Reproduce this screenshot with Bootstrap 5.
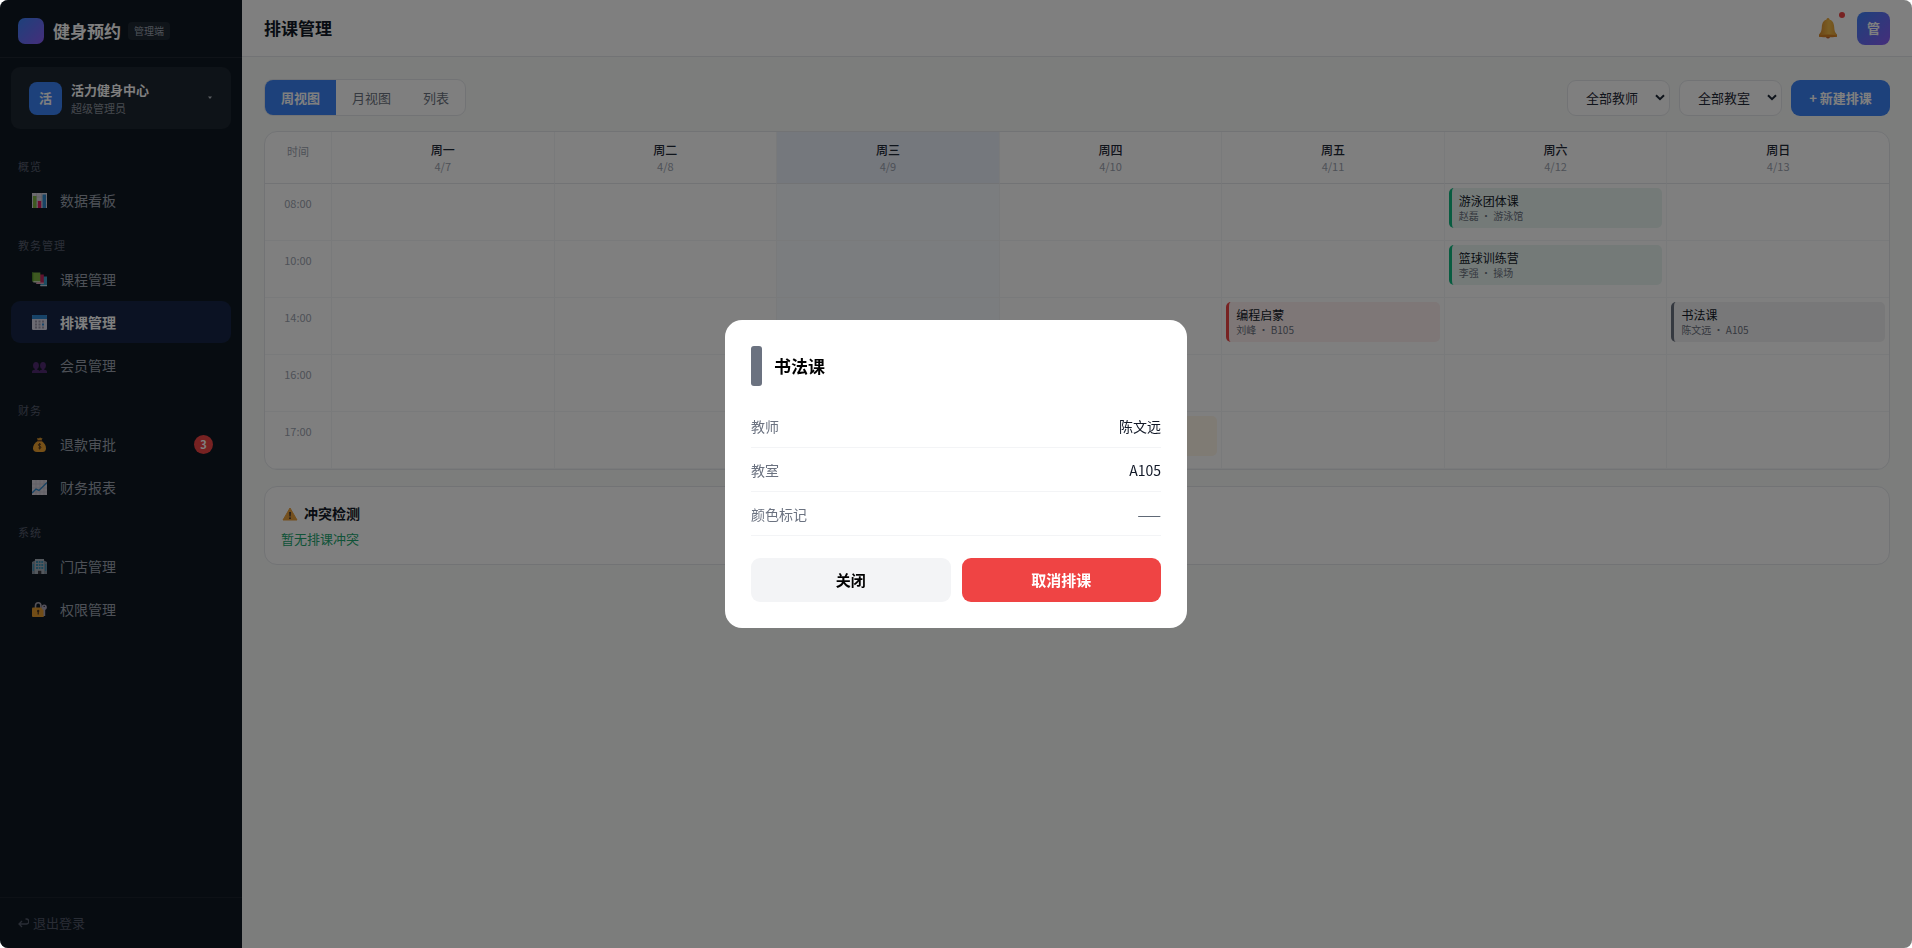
<!DOCTYPE html>
<html lang="zh-CN">
<head>
<meta charset="utf-8">
<meta name="viewport" content="width=device-width, initial-scale=1">
<title>排课管理 - 健身预约</title>
<link rel="stylesheet" href="https://cdn.jsdelivr.net/npm/bootstrap@5.3.0/dist/css/bootstrap.min.css">
<style>
  body { font-family: "Noto Sans CJK SC", "Noto Sans", sans-serif; font-size: 14px; line-height: 20px; color: #111827; background: #fff; }
  button, select { font-family: inherit; }
  .app { min-height: 100vh; border-radius: 8px; background: #f8fbf9; }

  /* sidebar */
  .sidebar { width: 242px; background: #0f1923; }
  .brand-bar { height: 58px; padding: 0 18px; border-bottom: 1px solid #1e2731; }
  .brand-mark { width: 26px; height: 26px; border-radius: 7px; background: linear-gradient(135deg, #3b82f6, #8b5cf6); }
  .brand-name { font-size: 17px; margin-left: 9px; color: #fff; }
  .brand-tag { font-size: 10px; line-height: 18px; padding: 0 6px; margin-left: 7px; border-radius: 4px; background: #1f2832; color: #9ca3af; }
  .store { margin: 9px 11px 14px; padding: 0 18px; height: 62px; border: 0; border-radius: 9px; background: #1d2630; text-align: left; }
  .avatar { width: 33px; height: 33px; border-radius: 8px; color: #fff; font-size: 13px; background: #3b82f6; }
  .store-text { margin-left: 9px; }
  .store-name { font-size: 13px; line-height: 20px; color: #fff; }
  .store-role { font-size: 11px; line-height: 16px; color: #8b929d; }
  .nav-label { font-size: 11px; line-height: 14px; letter-spacing: 1px; padding: 16px 18px 6px; color: #575e6f; }
  .side-link { height: 42px; margin: 0 11px 1px; padding: 0 18px 0 21px; border-radius: 9px; color: #9ca3af; text-decoration: none; }
  .side-link svg { width: 15px; height: 15px; margin-right: 13px; }
  .side-link.current { background: #162546; color: #fff; font-weight: 700; }
  .count { min-width: 19px; line-height: 19px; border-radius: 10px; background: #ef4444; color: #fff; font-size: 11px; text-align: center; }
  .logout { height: 51px; padding: 0 18px; border-top: 1px solid #1a232d; font-size: 13px; color: #535a6b; text-decoration: none; }
  .logout svg { margin-right: 4px; }

  /* top bar and tools */
  .topbar { height: 57px; padding: 0 22px; background: #fff; border-bottom: 1px solid #e5e7eb; }
  .topbar h1 { font-size: 17px; line-height: 24px; font-weight: 700; }
  .bell { width: 20px; height: 22px; margin-right: 19px; }
  .bell-dot { position: absolute; top: -5px; right: -7px; width: 6px; height: 6px; border-radius: 50%; background: #ef4444; }
  .avatar-me { background: linear-gradient(135deg, #3b82f6, #8b5cf6); }
  .content { padding: 22px; }
  .tools { gap: 9px; margin-bottom: 15px; }
  .seg { border: 1px solid #e5e7eb; border-radius: 9px; overflow: hidden; background: #fff; }
  .seg button { height: 35px; padding: 0 16px; border: 0; background: none; font-size: 13px; color: #6b7280; }
  .seg button.on { background: #3b82f6; color: #fff; font-weight: 700; }
  .filter { width: 103px; height: 36px; padding: 0 18px; border-color: #e5e7eb; border-radius: 9px; font-size: 13px; line-height: 20px; color: #1f2937;
    background-color: #fff; background-size: 10px 7px; background-position: right 4px center;
    background-image: url("data:image/svg+xml,%3Csvg xmlns='http://www.w3.org/2000/svg' viewBox='0 0 10 7'%3E%3Cpath d='M1 1.2 5 5.2 9 1.2' fill='none' stroke='%231f2937' stroke-width='2'/%3E%3C/svg%3E"); }
  .btn-new { width: 99px; height: 36px; padding: 0; border: 0; border-radius: 9px; background: #3b82f6; color: #fff; font-size: 13px; font-weight: 700; }

  /* timetable */
  .panel { background: #fff; border: 1px solid #e5e7eb; border-radius: 13px; overflow: hidden; }
  .timetable { width: 100%; table-layout: fixed; border-collapse: separate; border-spacing: 0; }
  .timetable th, .timetable td { padding: 0; vertical-align: top; border: solid #f3f4f6; border-width: 0 0 1px 1px; }
  .timetable thead th { height: 52px; padding-top: 9px; text-align: center; border-bottom-color: #e5e7eb; font-weight: 400; }
  .timetable .hour { width: 66px; border-left-width: 0; font-size: 11px; line-height: 20px; text-align: center; font-weight: 400; color: #9ca3af; }
  .timetable tbody .hour { padding-top: 9px; }
  .timetable tbody tr { height: 57px; }
  .day-name { font-size: 12px; line-height: 18px; font-weight: 500; color: #1f2937; }
  .day-date { font-size: 11px; line-height: 15px; color: #9ca3af; }
  .timetable thead .today { background: #eaf0fb; }
  .timetable tbody .today { background: #f7faff; }
  .timetable tbody td { padding: 4px; }
  .lesson { height: 40px; padding: 4px 7px; border-left: 3px solid; border-radius: 5px; }
  .lesson-name { font-size: 12px; line-height: 18px; color: #111827; }
  .lesson-info { font-size: 10px; line-height: 12px; color: #6b7280; }
  .lesson-green { background: #e9f5f1; border-color: #10b981; }
  .lesson-red { background: #fceeee; border-color: #ef4444; }
  .lesson-grey { background: #f1f1f2; border-color: #6b7280; }
  .lesson-amber { background: #fef6e9; border-color: #f59e0b; }
  .conflict { padding: 16px; margin-top: 16px; }
  .conflict h2 { font-size: 14px; line-height: 20px; margin-bottom: 7px; font-weight: 700; }
  .conflict svg { width: 17px; height: 15px; margin-right: 6px; }
  .conflict p { font-size: 13px; line-height: 18px; color: #22a670; }

  /* lesson dialog */
  .veil { background: rgba(0, 0, 0, .5); border-radius: 8px; overflow: hidden; }
  .veil .modal-dialog { max-width: 462px; }
  .veil .modal-content { padding: 26px; border: 0; border-radius: 17px; }
  .tone { width: 11px; height: 40px; border-radius: 3px; background: #6b7280; }
  .veil h2 { font-size: 17px; line-height: 24px; font-weight: 700; color: #000; }
  .facts { margin: 18px 0 22px; }
  .fact { height: 44px; border-bottom: 1px solid #f3f4f6; font-size: 14px; }
  .fact dt { font-weight: 400; color: #6b7280; }
  .fact .swatch { color: #4b5563; }
  .acts { gap: 11px; }
  .act { height: 44px; border: 0; border-radius: 9px; font-size: 15px; font-weight: 700; background: #f3f4f6; color: #000; }
  .act-danger { background: #ef4444; color: #fff; }
</style>
</head>
<body>
<div class="app d-flex overflow-hidden">
  <aside class="sidebar d-flex flex-column flex-shrink-0">
    <div class="brand-bar d-flex align-items-center pt-1">
      <span class="brand-mark"></span>
      <span class="brand-name fw-bold">健身预约</span>
      <span class="brand-tag">管理端</span>
    </div>
    <button type="button" class="store d-flex align-items-center">
      <span class="avatar d-flex align-items-center justify-content-center fw-bold">活</span>
      <span class="store-text d-flex flex-column">
        <span class="store-name fw-bold">活力健身中心</span>
        <span class="store-role">超级管理员</span>
      </span>
      <svg class="ms-auto" width="6" height="4" viewBox="0 0 6 4"><path d="M1 .5h4L3 3z" fill="#b5bac2"/></svg>
    </button>
    <nav>
      <div class="nav-label">概览</div>
      <a href="#" class="side-link d-flex align-items-center">
        <svg viewBox="0 0 15 15"><rect width="15" height="15" fill="#d9d5de"/><path d="M0 4h15M0 8h15M0 12h15M4.500 0v15M9.500 0v15" stroke="#b9b5c2" stroke-width=".6"/><rect x="1" y="3" width="3.500" height="12" fill="#7cb342"/><rect x="5.800" y="8" width="3.400" height="7" fill="#d81b60"/><rect x="10.500" y="1.500" width="3.500" height="13.500" fill="#2f86c9"/></svg>数据看板</a>
      <div class="nav-label">教务管理</div>
      <a href="#" class="side-link d-flex align-items-center">
        <svg viewBox="0 0 15 15"><path d="M7 4.500h8V13H8.500z" fill="#3c9cc4"/><path d="M8 13h7v1.300H8.500z" fill="#b9d4e4"/><path d="M4 2.500h7.800V11H5z" fill="#c2255c"/><path d="M3.500 10.500h8.300v1.400H4.500z" fill="#dca3bd"/><path d="M0 .5h8.300V9H0z" fill="#7cb342"/><path d="M.3 9h8v1.500H1.500z" fill="#cbdcb8"/><path d="M0 .5h1.300V10L0 9z" fill="#4f8a2b"/></svg>课程管理</a>
      <a href="#" class="side-link current d-flex align-items-center" aria-current="page">
        <svg viewBox="0 0 15 15"><rect width="15" height="15" rx="1.200" fill="#d9d6e6"/><path d="M0 4V1.200Q0 0 1.200 0h12.600Q15 0 15 1.200V4z" fill="#2f86d1"/><g fill="#9a97aa"><path d="M3 5.500h2v2H3zM6.500 5.500h2v2h-2zM10 5.500h2v2h-2zM3 8.500h2v2H3zM6.500 8.500h2v2h-2zM3 11.500h2v2H3zM6.500 11.500h2v2h-2zM10 11.500h2v2h-2z"/></g><path d="M10 8.500h2v2h-2z" fill="#2f86d1"/></svg>排课管理</a>
      <a href="#" class="side-link d-flex align-items-center">
        <svg viewBox="0 0 15 15"><g fill="#512b72"><ellipse cx="4" cy="7.500" rx="2.900" ry="3.600"/><ellipse cx="11" cy="7.500" rx="2.900" ry="3.600"/><path d="M0 15v-1.500q0-1.500 2.800-1.800V10h2.400v1.700q2.300.3 2.300 1.500 0-1.200 2.300-1.500V10h2.400v1.700q2.800.3 2.800 1.800V15z"/></g></svg>会员管理</a>
      <div class="nav-label">财务</div>
      <a href="#" class="side-link d-flex align-items-center">
        <svg viewBox="0 0 15 15"><path d="M5 1.500q1-1 2 0 1-1.800 2.200-.3l1.300-.2-1 2.300H5.800z" fill="#d9962e"/><path d="M5.800 4h4q4.200 3.300 4.200 7.300 0 3.700-3.500 3.700H5q-4 0-4-3.700Q1 7 5.800 4z" fill="#eda02f"/><path d="M5.500 3.200h4.600v1.300H5.500z" fill="#7a4a2a"/><path d="M9 7.500Q7.500 6.300 6.400 7.500q-.4 1 1.200 1.600 1.900.7 1.300 1.800-1 1-2.500 0M7.600 6v6.500" fill="none" stroke="#5a3c20" stroke-width="1"/></svg>退款审批<span class="count ms-auto fw-bold">3</span></a>
      <a href="#" class="side-link d-flex align-items-center">
        <svg viewBox="0 0 15 15"><rect width="15" height="15" fill="#d9d5de"/><path d="M0 4h15M0 8h15M0 12h15M4 0v15M8 0v15M12 0v15" stroke="#b9b5c2" stroke-width=".6"/><path d="m0 13 4-4 3 1.500L15 2.500" fill="none" stroke="#2f86c9" stroke-width="1.400"/></svg>财务报表</a>
      <div class="nav-label">系统</div>
      <a href="#" class="side-link d-flex align-items-center">
        <svg viewBox="0 0 15 15"><path d="M0 3 3 1.500V15H0zM12 1.500 15 3v12h-3z" fill="#8794a2"/><path d="M3 0h9v15H3z" fill="#a7b0ba"/><path d="M4 2h2v2H4zM6.800 2h1.700v2H6.800zM9.300 2h1.900v2H9.300zM4 5h2v2H4zM6.800 5h1.700v2H6.800zM9.300 5h1.900v2H9.300zM4 8h2v2H4zM6.800 8h1.700v2H6.800zM9.300 8h1.900v2H9.300zM.7 5h1.300v7H.7zM13 5h1.300v7H13z" fill="#3c91b5"/><path d="M6 11.800h3.300V15H6z" fill="#38383f"/></svg>门店管理</a>
      <a href="#" class="side-link d-flex align-items-center">
        <svg viewBox="0 0 15 15"><path d="M3.500 6V3.800q0-3 2.700-3 2.700 0 2.700 3V6" fill="none" stroke="#a9a4ae" stroke-width="1.600"/><rect y="5.500" width="12" height="9.500" rx="1" fill="#e39a2e"/><circle cx="6.200" cy="9" r="1.200" fill="#4a3520"/><path d="M5.600 9h1.200v3.500H5.600z" fill="#4a3520"/><circle cx="12.200" cy="5.200" r="2.600" fill="#aaa5b8"/><path d="M11.500 6h1.700v8h-1.700z" fill="#aaa5b8"/><circle cx="12.200" cy="4.400" r=".7" fill="#1c2430"/></svg>权限管理</a>
    </nav>
    <a href="#" class="logout mt-auto d-flex align-items-center"><svg width="11" height="10" viewBox="0 0 11 10" fill="none" stroke="currentColor" stroke-width="1.300" aria-hidden="true"><path d="M7.500 1h.8a2.200 2.200 0 0 1 0 5H1M4 3 1 6l3 3"/></svg>退出登录</a>
  </aside>

  <div class="flex-grow-1 overflow-hidden">
    <header class="topbar d-flex align-items-center">
      <h1 class="mb-0 me-auto">排课管理</h1>
      <span class="bell position-relative">
        <svg class="d-block" width="20" height="22" viewBox="0 0 20 22"><defs><linearGradient id="brass"><stop stop-color="#d98a2c"/><stop offset=".55" stop-color="#f3bb48"/><stop offset="1" stop-color="#e09a34"/></linearGradient></defs><circle cx="10" cy="2.500" r="1.500" fill="#e9a02c"/><path d="M10 2.500c4.300 0 6 3.500 6.200 7.500.2 4 .8 5.500 2.800 7.500v2H1v-2c2-2 2.600-3.500 2.800-7.500C4 6 5.700 2.500 10 2.500z" fill="url(#brass)"/><path d="M1 18.500q9-2.200 18 0v1.200q-9 1.200-18 0z" fill="#d98324"/><path d="M8 20h4q-.5 1.600-2 1.600T8 20z" fill="#c2612a"/></svg>
        <span class="bell-dot"></span>
      </span>
      <span class="avatar avatar-me d-flex align-items-center justify-content-center fw-bold">管</span>
    </header>

    <main class="content">
      <div class="tools d-flex align-items-center">
        <div class="seg d-flex me-auto">
          <button type="button" class="on">周视图</button>
          <button type="button">月视图</button>
          <button type="button">列表</button>
        </div>
        <select class="form-select filter" aria-label="教师"><option>全部教师</option></select>
        <select class="form-select filter" aria-label="教室"><option>全部教室</option></select>
        <button type="button" class="btn-new">+ 新建排课</button>
      </div>

      <div class="panel">
        <table class="timetable">
          <thead>
            <tr>
              <th class="hour">时间</th>
              <th><div class="day-name">周一</div><div class="day-date">4/7</div></th>
              <th><div class="day-name">周二</div><div class="day-date">4/8</div></th>
              <th class="today"><div class="day-name">周三</div><div class="day-date">4/9</div></th>
              <th><div class="day-name">周四</div><div class="day-date">4/10</div></th>
              <th><div class="day-name">周五</div><div class="day-date">4/11</div></th>
              <th><div class="day-name">周六</div><div class="day-date">4/12</div></th>
              <th><div class="day-name">周日</div><div class="day-date">4/13</div></th>
            </tr>
          </thead>
          <tbody>
            <tr><th class="hour">08:00</th><td></td><td></td><td class="today"></td><td></td><td></td>
              <td><div class="lesson lesson-green"><div class="lesson-name">游泳团体课</div><div class="lesson-info">赵磊 · 游泳馆</div></div></td><td></td></tr>
            <tr><th class="hour">10:00</th><td></td><td></td><td class="today"></td><td></td><td></td>
              <td><div class="lesson lesson-green"><div class="lesson-name">篮球训练营</div><div class="lesson-info">李强 · 操场</div></div></td><td></td></tr>
            <tr><th class="hour">14:00</th><td></td><td></td><td class="today"></td><td></td>
              <td><div class="lesson lesson-red"><div class="lesson-name">编程启蒙</div><div class="lesson-info">刘峰 · B105</div></div></td><td></td>
              <td><div class="lesson lesson-grey"><div class="lesson-name">书法课</div><div class="lesson-info">陈文远 · A105</div></div></td></tr>
            <tr><th class="hour">16:00</th><td></td><td></td><td class="today"></td><td></td><td></td><td></td><td></td></tr>
            <tr><th class="hour">17:00</th><td></td><td></td><td class="today"></td>
              <td><div class="lesson lesson-amber"></div></td><td></td><td></td><td></td></tr>
          </tbody>
        </table>
      </div>

      <section class="panel conflict">
        <h2 class="d-flex align-items-center"><svg viewBox="0 0 17 15"><path d="M9 2 16 14H2z" fill="#e9a03c" stroke="#e9a03c" stroke-width="1" stroke-linejoin="round"/><path d="M8.200 6h1.700l-.3 4.500H8.500z" fill="#3a3030"/><circle cx="9" cy="12.200" r=".9" fill="#3a3030"/></svg>冲突检测</h2>
        <p class="mb-0">暂无排课冲突</p>
      </section>
    </main>
  </div>
</div>

<div class="modal veil d-block" role="dialog" aria-modal="true" aria-labelledby="lesson-title">
  <div class="modal-dialog modal-dialog-centered">
    <div class="modal-content">
      <div class="d-flex align-items-center">
        <span class="tone"></span>
        <h2 id="lesson-title" class="mb-0 ms-2 ps-1">书法课</h2>
      </div>
      <dl class="facts">
        <div class="fact d-flex justify-content-between align-items-center"><dt>教师</dt><dd class="mb-0">陈文远</dd></div>
        <div class="fact d-flex justify-content-between align-items-center"><dt>教室</dt><dd class="mb-0">A105</dd></div>
        <div class="fact d-flex justify-content-between align-items-center"><dt>颜色标记</dt><dd class="mb-0 swatch">——</dd></div>
      </dl>
      <div class="acts d-flex">
        <button type="button" class="act w-50">关闭</button>
        <button type="button" class="act act-danger w-50">取消排课</button>
      </div>
    </div>
  </div>
</div>
<script src="https://cdn.jsdelivr.net/npm/bootstrap@5.3.0/dist/js/bootstrap.bundle.min.js"></script>
</body>
</html>
